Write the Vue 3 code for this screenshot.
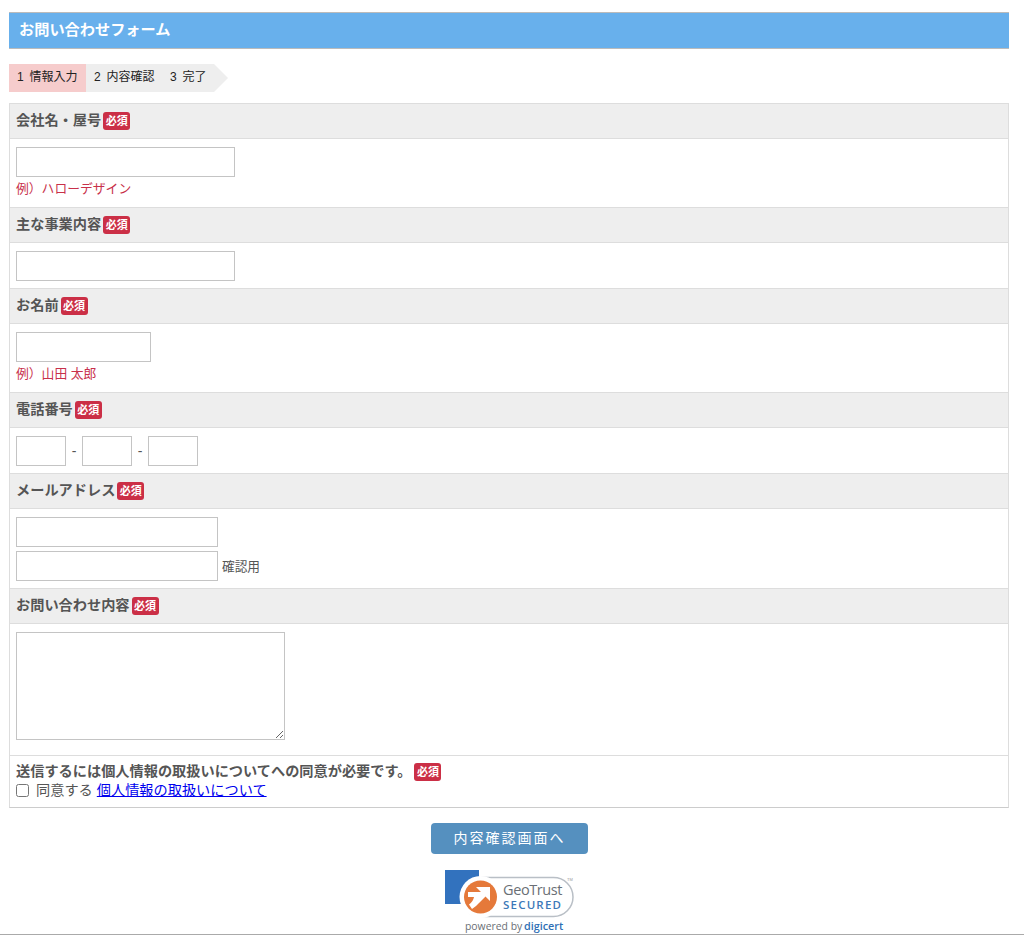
<template>
  <div class="page">
    <h1 class="title">お問い合わせフォーム</h1>

    <ol class="steps">
      <li class="step active">1 情報入力</li>
      <li class="step">2 内容確認</li>
      <li class="step last">3 完了</li>
    </ol>

    <form class="form" @submit.prevent>
      <section class="row">
        <div class="label">会社名・屋号<span class="must">必須</span></div>
        <div class="field">
          <input class="input w219" type="text" />
          <p class="hint">例）ハローデザイン</p>
        </div>
      </section>

      <section class="row">
        <div class="label">主な事業内容<span class="must">必須</span></div>
        <div class="field">
          <input class="input w219" type="text" />
        </div>
      </section>

      <section class="row">
        <div class="label">お名前<span class="must">必須</span></div>
        <div class="field">
          <input class="input w135" type="text" />
          <p class="hint">例）山田 太郎</p>
        </div>
      </section>

      <section class="row">
        <div class="label">電話番号<span class="must">必須</span></div>
        <div class="field tel">
          <input class="input w50" type="text" />
          <span class="dash">-</span>
          <input class="input w50" type="text" />
          <span class="dash">-</span>
          <input class="input w50" type="text" />
        </div>
      </section>

      <section class="row">
        <div class="label">メールアドレス<span class="must">必須</span></div>
        <div class="field">
          <input class="input w202" type="text" />
          <div class="confirm">
            <input class="input w202" type="text" />
            <span class="note">確認用</span>
          </div>
        </div>
      </section>

      <section class="row">
        <div class="label">お問い合わせ内容<span class="must">必須</span></div>
        <div class="field message">
          <textarea class="area"></textarea>
        </div>
      </section>

      <section class="agree">
        <div class="agreeTitle">送信するには個人情報の取扱いについてへの同意が必要です。<span class="must wide">必須</span></div>
        <label class="agreeLine">
          <input class="check" type="checkbox" />
          <span>同意する</span>
          <a class="link" href="#">個人情報の取扱いについて</a>
        </label>
      </section>
    </form>

    <button class="submit" type="button">内容確認画面へ</button>

    <div class="seal">
      <svg width="130" height="65" viewBox="0 0 130 65">
        <rect x="0" y="1" width="34" height="34" fill="#3272be" />
        <rect x="16" y="8.5" width="112" height="39" rx="19.5" fill="#fff" stroke="#b9bfc6" stroke-width="1.5" />
        <circle cx="35.5" cy="28" r="21" fill="#fff" />
        <circle cx="35.5" cy="28" r="16.5" fill="#e5793a" />
        <path d="M31 18H45V32L40.5 27.5L34 34Q31 37.5 27 40L24 35.5Q28 33 29 28H23V23H36Z" fill="#fff" />
        <text x="58" y="26" class="geo">GeoTrust</text>
        <text x="58" y="40" class="secured">SECURED</text>
        <text x="122" y="12" class="tm">TM</text>
        <text x="20" y="61" class="powered">powered by</text>
        <text x="79" y="61" class="digicert">digicert</text>
      </svg>
    </div>
  </div>
</template>

<script setup>
</script>

<style>
html,
body {
  margin: 0;
  background: #fff;
}
</style>

<style scoped>
.page {
  box-sizing: border-box;
  width: 1024px;
  height: 935px;
  padding: 12px 15px 0 9px;
  overflow: hidden;
  border-bottom: 1px solid #aaa;
  font-family: "Liberation Sans", "Noto Sans CJK JP", sans-serif;
  color: #555;
}

.title {
  box-sizing: border-box;
  height: 37px;
  margin: 0;
  padding-left: 10px;
  border-top: 1px solid #bbb;
  border-bottom: 1px solid #bbb;
  background: #68b0ec;
  color: #fff;
  font-size: 15.2px;
  font-weight: bold;
  line-height: 33px;
}

/* ステップ */
.steps {
  display: flex;
  height: 28px;
  margin: 15px 0 11px;
  padding: 0;
  list-style: none;
  font-size: 12px;
  word-spacing: 2.5px;
  line-height: 27px;
  color: #222;
}
.step {
  box-sizing: border-box;
  width: 76px;
  padding-left: 8px;
  background: #eee;
}
.step.active {
  width: 77px;
  background: #f6cccc;
}
.step.last {
  position: relative;
  width: 52px;
}
.step.last::after {
  content: "";
  position: absolute;
  top: 0;
  left: 100%;
  border-left: 14px solid #eee;
  border-top: 14px solid transparent;
  border-bottom: 14px solid transparent;
}

/* フォーム本体 */
.form {
  border: 1px solid #ddd;
  border-bottom-color: #ccc;
}
.label {
  box-sizing: border-box;
  height: 35px;
  padding-left: 6px;
  border-bottom: 1px solid #ddd;
  background: #eee;
  font-size: 14.2px;
  font-weight: bold;
  line-height: 32px;
}
.must {
  display: inline-block;
  height: 18px;
  margin-left: 2px;
  padding: 0 2.5px;
  border-radius: 3px;
  background: #cb2f46;
  color: #fff;
  font-size: 11px;
  font-weight: bold;
  line-height: 18px;
  vertical-align: 0;
}
.must.wide {
  margin-left: 3px;
}
.field {
  padding: 8px 6px 7px;
  border-bottom: 1px solid #ddd;
}
.input {
  display: block;
  box-sizing: border-box;
  height: 30px;
  margin: 0;
  padding: 0 4px;
  border: 1px solid #c4c4c4;
  background: #fff;
}
.w219 { width: 219px; }
.w202 { width: 202px; }
.w135 { width: 135px; }
.w50 { width: 50px; }
.hint {
  height: 23px;
  margin: 0;
  color: #c8304a;
  font-size: 12.8px;
  line-height: 23px;
}
.tel {
  display: flex;
  align-items: center;
}
.dash {
  width: 16px;
  text-align: center;
  font-size: 14px;
}
.confirm {
  display: flex;
  align-items: flex-end;
  margin-top: 4px;
}
.note {
  margin-left: 4px;
  font-size: 12.7px;
  line-height: 28px;
}
.message {
  padding-bottom: 15px;
}
.area {
  display: block;
  box-sizing: border-box;
  width: 269px;
  height: 108px;
  margin: 0;
  border: 1px solid #c4c4c4;
}
.agree {
  box-sizing: border-box;
  height: 51px;
  padding: 6px 6px 0;
  font-size: 14.2px;
  line-height: 19px;
}
.agreeTitle {
  height: 19px;
  font-weight: bold;
}
.agreeLine {
  display: flex;
  align-items: center;
  height: 19px;
}
.check {
  width: 13px;
  height: 13px;
  margin: 0 7px 0 0;
}
.link {
  margin-left: 4px;
  color: #00e;
  text-decoration: underline;
}

/* ボタン */
.submit {
  display: block;
  width: 157px;
  height: 31px;
  margin: 15px 0 0 422px;
  padding: 0 0 3px;
  border: 0;
  border-radius: 4px;
  background: #5590bf;
  color: #fff;
  font-family: inherit;
  font-size: 14px;
  letter-spacing: 2px;
}

.seal {
  width: 130px;
  height: 65px;
  margin: 15px 0 0 436px;
}
.seal svg {
  display: block;
}
.geo {
  font-family: "Open Sans", sans-serif;
  font-size: 14.5px;
  letter-spacing: -0.4px;
  fill: #6a6f75;
}
.secured {
  font-family: "Open Sans", sans-serif;
  font-size: 11.5px;
  font-weight: 600;
  letter-spacing: 1.2px;
  fill: #3c78b8;
}
.tm {
  font-family: "Liberation Sans", sans-serif;
  font-size: 4px;
  fill: #999;
}
.powered {
  font-family: "Open Sans", sans-serif;
  font-size: 10.4px;
  fill: #6a6f75;
}
.digicert {
  font-family: "Open Sans", sans-serif;
  font-size: 10.8px;
  font-weight: 600;
  fill: #2f6fb5;
}
</style>
